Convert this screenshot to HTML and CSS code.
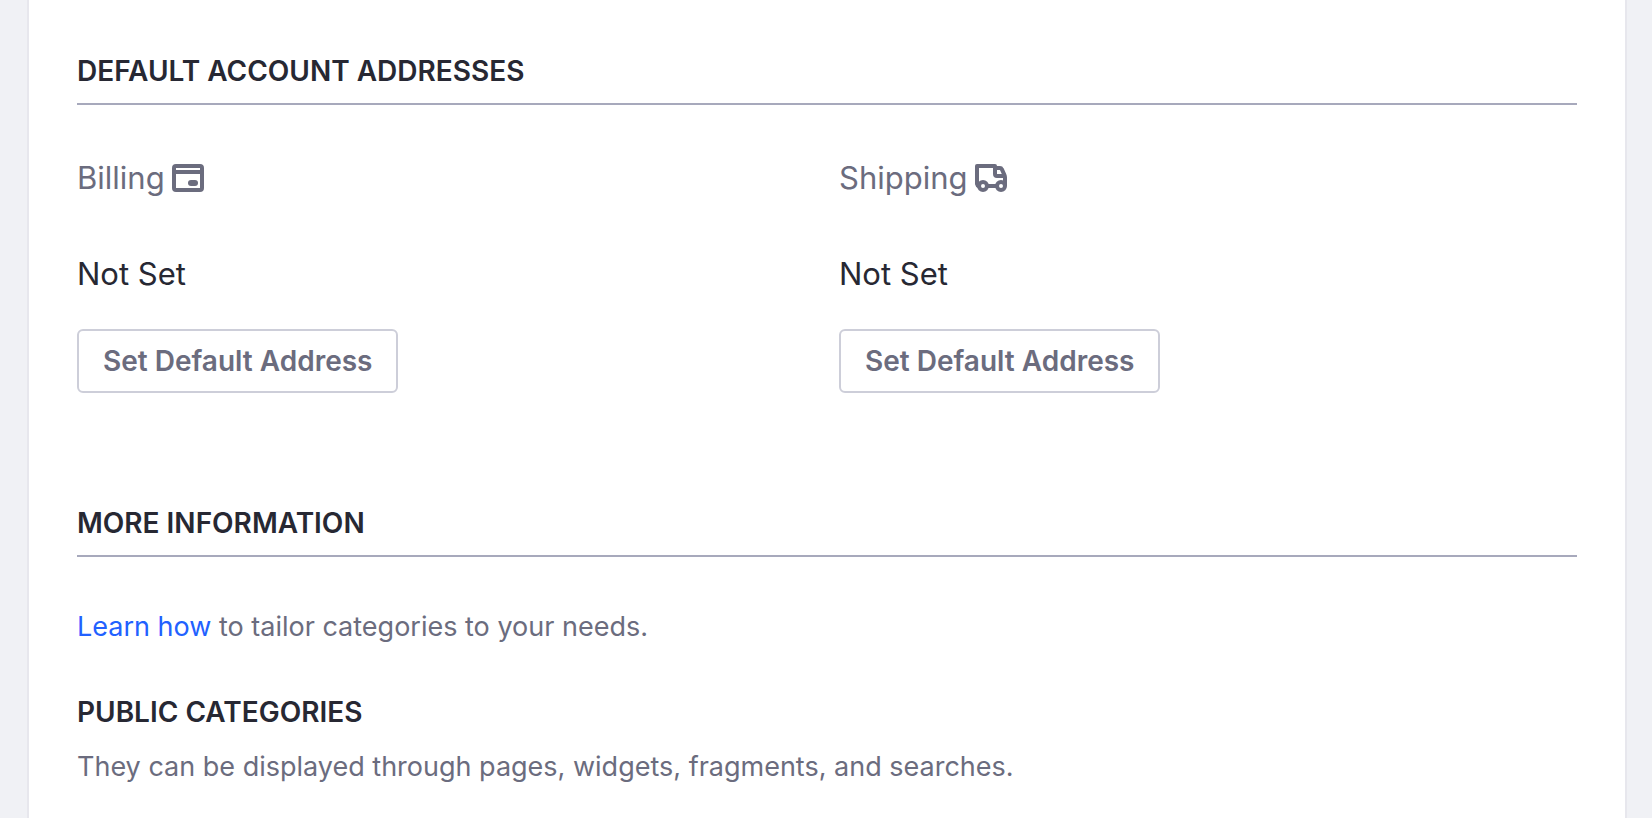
FILE: index.html
```
<!DOCTYPE html>
<html lang="en">
<head>
<meta charset="utf-8">
<meta name="viewport" content="width=device-width, initial-scale=1">
<title>Account</title>
<link rel="stylesheet" href="styles.css">
</head>
<body>
<main class="sheet">
  <section class="section">
    <h2 class="section-title ruled">Default Account Addresses</h2>
    <div class="addresses">
      <div class="address">
        <h3 class="address-title">Billing
          <svg class="icon" viewBox="0 0 16 16" aria-hidden="true"><path fill="currentColor" fill-rule="evenodd" d="M2 1h12a2 2 0 0 1 2 2v10a2 2 0 0 1-2 2H2a2 2 0 0 1-2-2V3a2 2 0 0 1 2-2zM2 3v1h12V3zM2 6v7h12V6z"/><rect x="8" y="9" width="5" height="3" rx="1.5" fill="currentColor"/></svg>
        </h3>
        <p class="address-value">Not Set</p>
        <button class="button" type="button">Set Default Address</button>
      </div>
      <div class="address">
        <h3 class="address-title">Shipping
          <svg class="icon" viewBox="0 0 16 16" fill="none" stroke="currentColor" stroke-width="2" stroke-linejoin="round" aria-hidden="true"><path d="M2 12.200A1.500 1.500 0 0 1 1 11V2h9v4a1 1 0 0 0 1 1h4M10 3h2.500a1 1 0 0 1 .9.6L14.700 6.400a3 3 0 0 1 .3 1.300V12M6 12h5"/><circle cx="4" cy="12" r="2"/><circle cx="13" cy="12" r="2"/></svg>
        </h3>
        <p class="address-value">Not Set</p>
        <button class="button" type="button">Set Default Address</button>
      </div>
    </div>
  </section>
  <section class="section">
    <h2 class="section-title ruled">More Information</h2>
    <p class="text lead"><a class="link" href="#">Learn how</a> to tailor categories to your needs.</p>
    <h3 class="section-title">Public Categories</h3>
    <p class="text detail">They can be displayed through pages, widgets, fragments, and searches.</p>
  </section>
</main>
</body>
</html>
```
FILE: styles.css
```
* { box-sizing: border-box; }

body {
  margin: 0;
  padding: 0 25px 0 27px;
  background: #f0f1f5;
  color: #272833;
  font-family: Inter, "Liberation Sans", sans-serif;
  font-size: 27px;
  line-height: 42px;
}

h2, h3, p { margin: 0; }

.sheet {
  display: flex;
  flex-direction: column;
  gap: 109px;
  min-height: 100vh;
  padding: 50px 48px 30px;
  background: #fff;
  border: solid #e7e7ed;
  border-width: 0 2px;
}

.section-title {
  font-size: 28px;
  font-weight: 600;
  text-transform: uppercase;
}

.ruled {
  padding-bottom: 11px;
  margin-bottom: 49px;
  border-bottom: 2px solid #a7a9bc;
}

.addresses {
  display: grid;
  grid-template-columns: 1fr 1fr;
  gap: 24px;
}

.address {
  display: flex;
  flex-direction: column;
  align-items: flex-start;
  font-size: 31px;
  line-height: 48px;
}

.address-title {
  display: flex;
  align-items: center;
  gap: 7px;
  margin-bottom: 48px;
  color: #6b6c7e;
  font-size: 31px;
  font-weight: 400;
}

.icon {
  width: 32px;
  height: 32px;
}

.address-value { margin-bottom: 31px; }

.button {
  height: 64px;
  padding: 0 24px;
  background: #fff;
  border: 2px solid #cdced9;
  border-radius: 6px;
  color: #6b6c7e;
  font: 600 28px/42px Inter, "Liberation Sans", sans-serif;
}

.text { color: #6b6c7e; }

.lead { margin-bottom: 43px; }

.detail { margin-top: 13px; }

.link {
  color: #2261ff;
  text-decoration: none;
}
```
